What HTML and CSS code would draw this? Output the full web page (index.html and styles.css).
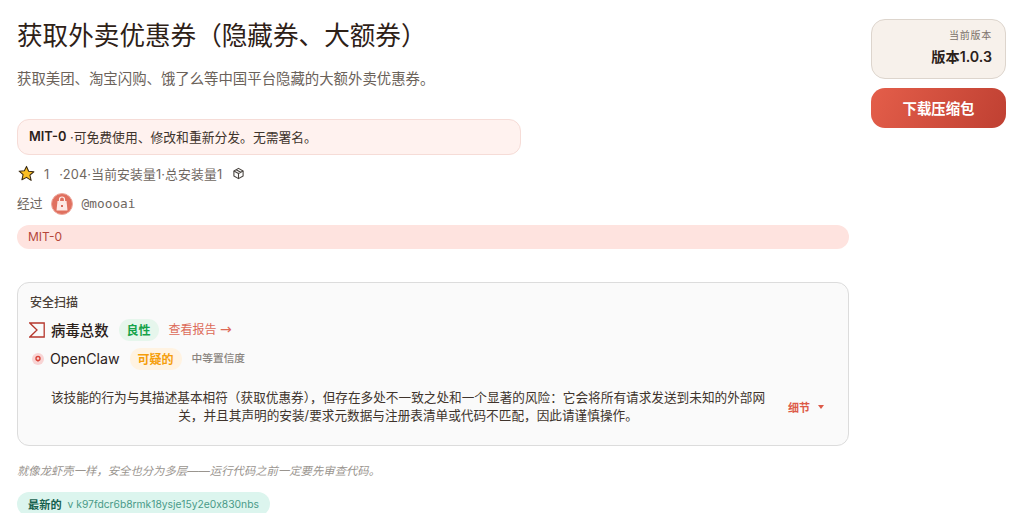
FILE: index.html
```html
<!DOCTYPE html>
<html lang="zh-CN">
<head>
    <meta charset="UTF-8">
    <meta name="viewport" content="width=device-width, initial-scale=1.0">
    <title>获取外卖优惠券（隐藏券、大额券）</title>
    <link rel="stylesheet" href="styles.css">
</head>
<body>
    <div class="page">
        <main class="main">
            <h1>获取外卖优惠券（隐藏券、大额券）</h1>
            <p class="summary">获取美团、淘宝闪购、饿了么等中国平台隐藏的大额外卖优惠券。</p>

            <div class="license-note"><strong>MIT-0</strong> ·可免费使用、修改和重新分发。无需署名。</div>

            <div class="stats">
                <svg class="star" width="17" height="17" viewBox="0 0 24 24"><path d="M12 2l3 6.800 7.400.7-5.600 4.900 1.700 7.300L12 17.500l-6.500 3.400 1.700-7.300-5.600-4.900 7.400-.7z" fill="#fbbf24" stroke="#3a2a14" stroke-width="1.500" stroke-linejoin="round"/></svg>
                <span class="stats-text">1<span class="stats-gap"></span>·204·当前安装量1·总安装量1</span>
                <svg class="box" width="13" height="13" viewBox="0 0 24 24" fill="none" stroke="#4a4540" stroke-width="2" stroke-linejoin="round"><path d="M12 2.500l8.500 4.800v9.400L12 21.500l-8.500-4.800V7.300z"/><path d="M3.500 7.300L12 12l8.500-4.700M12 12v9.500M7.700 4.900l8.500 4.800"/></svg>
            </div>

            <div class="byline">
                <span class="byline-label">经过</span>
                <span class="avatar">
                    <svg width="14" height="16" viewBox="0 0 14 16"><path d="M4.500 6V3.500a2.500 2.500 0 0 1 5 0V6" fill="none" stroke="#fdeeea" stroke-width="1.200"/><path d="M2.500 5h9l1 9.500h-11z" fill="#fde8e4"/><rect x="6" y="9" width="2" height="2" fill="#d9695a"/></svg>
                </span>
                <span class="handle">@moooai</span>
            </div>

            <div class="tag-bar">MIT-0</div>

            <section class="scan">
                <div class="scan-title">安全扫描</div>
                <div class="scan-row scan-row-first">
                    <svg class="scan-icon scan-icon-vt" width="16" height="16" viewBox="0 0 16 16" fill="none" stroke="#b5372c" stroke-width="1.300"><path d="M.800 1h14.400v14H.800L8 8z"/></svg>
                    <span class="scan-name">病毒总数</span>
                    <span class="pill pill-green">良性</span>
                    <a class="report-link">查看报告 <span class="arrow">→</span></a>
                </div>
                <div class="scan-row">
                    <svg class="scan-icon" width="16" height="16" viewBox="0 0 16 16"><circle cx="8" cy="8" r="6" fill="#f8d4d4"/><circle cx="8" cy="7.500" r="2" fill="none" stroke="#d9453a" stroke-width="1.400"/><path d="M7 9.500h2L8 11z" fill="#d9453a"/></svg>
                    <span class="scan-name scan-name-light">OpenClaw</span>
                    <span class="pill pill-amber">可疑的</span>
                    <span class="confidence">中等置信度</span>
                </div>
                <div class="scan-detail">
                    <p>该技能的行为与其描述基本相符（获取优惠券），但存在多处不一致之处和一个显著的风险：它会将所有请求发送到未知的外部网关，并且其声明的安装/要求元数据与注册表清单或代码不匹配，因此请谨慎操作。</p>
                    <span class="details-toggle">细节<span class="caret"></span></span>
                </div>
            </section>

            <p class="scan-note">就像龙虾壳一样，安全也分为多层——运行代码之前一定要先审查代码。</p>

            <div class="latest"><strong>最新的</strong><span>v k97fdcr6b8rmk18ysje15y2e0x830nbs</span></div>
        </main>

        <aside class="side">
            <div class="version-card">
                <div class="version-label">当前版本</div>
                <div class="version-value">版本1.0.3</div>
            </div>
            <button class="download">下载压缩包</button>
        </aside>
    </div>
</body>
</html>
```

FILE: styles.css
```css
html, body {
    margin: 0;
    height: 513px;
    overflow: hidden;
    background-color: #fff;
}
body {
    font-family: Inter, "Noto Sans CJK SC", sans-serif;
    color: #2b211a;
}
.page {
    display: flex;
    gap: 22px;
    padding: 19px 14px 0 17px;
}
.main {
    width: 832px;
    flex-shrink: 0;
}
h1 {
    margin: 1px 0 0;
    font-size: 25.600px;
    line-height: 32px;
    font-weight: 400;
    color: #2e2117;
}
.summary {
    margin: 17px 0 0;
    font-size: 14.400px;
    line-height: 20px;
    color: #6b625a;
}
.license-note {
    margin-top: 30px;
    width: 504px;
    height: 36px;
    box-sizing: border-box;
    padding: 0 11px 1px;
    display: flex;
    align-items: center;
    white-space: pre;
    font-size: 12.800px;
    color: #40342c;
    background-color: #fff2ef;
    border: 1px solid #f6dcd7;
    border-radius: 12px;
}
.license-note strong {
    font-weight: 600;
    color: #2b211a;
}
.stats {
    display: flex;
    align-items: center;
    margin-top: 8px;
    height: 20px;
    font-size: 12.800px;
    letter-spacing: 0.150px;
    color: #6f675f;
}
.stats-gap {
    display: inline-block;
    width: 10px;
}
.star {
    margin-left: 1px;
    margin-right: 9px;
}
.box {
    margin-left: 10px;
}
.byline {
    display: flex;
    align-items: center;
    margin-top: 9px;
    height: 24px;
    font-size: 12.800px;
    color: #6f675f;
}
.byline-label {
    margin-bottom: 3px;
}
.avatar {
    width: 22px;
    height: 22px;
    box-sizing: border-box;
    margin: 0 8px;
    border-radius: 50%;
    background-color: #e0705f;
    border: 1px solid #eea99e;
    display: flex;
    align-items: center;
    justify-content: center;
}
.handle {
    margin-left: 1px;
    margin-bottom: 1px;
    font-family: "DejaVu Sans Mono", monospace;
    font-size: 12.800px;
}
.tag-bar {
    margin-top: 9px;
    height: 24px;
    line-height: 24px;
    padding-left: 11px;
    font-size: 12px;
    color: #b5463a;
    background-color: #fee3df;
    border-radius: 12px;
}
.scan {
    margin-top: 33px;
    height: 164px;
    box-sizing: border-box;
    padding: 11px 12px 0;
    background-color: #fafafa;
    border: 1px solid #dcdcdc;
    border-radius: 12px;
}
.scan-title {
    font-size: 12px;
    line-height: 17px;
    font-weight: 500;
    color: #4a4038;
}
.scan-row {
    display: flex;
    align-items: center;
    height: 24px;
    margin-top: 5px;
}
.scan-row-first {
    margin-top: 7px;
}
.scan-icon {
    flex-shrink: 0;
    margin-right: 4px;
}
.scan-icon-vt {
    margin-left: -1px;
    margin-right: 6px;
}
.scan-name {
    margin-bottom: 1px;
    font-size: 14.400px;
    font-weight: 500;
    color: #2b211a;
}
.scan-name-light {
    font-size: 14.200px;
    font-weight: 400;
}
.pill {
    margin-left: 10px;
    padding: 0 8px;
    height: 22px;
    line-height: 24px;
    border-radius: 11px;
    font-size: 12px;
    font-weight: 600;
}
.pill-green {
    color: #16a34a;
    background-color: #e6f6ec;
}
.pill-amber {
    color: #f59e0b;
    background-color: #fff3e2;
}
.report-link {
    margin-left: 10px;
    margin-bottom: 3px;
    font-size: 12px;
    color: #dd6a58;
}
.arrow {
    font-family: "DejaVu Sans", sans-serif;
    font-size: 14px;
}
.confidence {
    margin-left: 10px;
    margin-bottom: 3px;
    font-size: 10.700px;
    font-weight: 500;
    color: #8a8580;
}
.scan-detail {
    display: flex;
    align-items: center;
    margin-top: 18px;
}
.scan-detail p {
    flex: 0 0 726px;
    margin: 0 17px 0 15px;
    text-align: center;
    font-size: 12.650px;
    line-height: 18px;
    color: #40342c;
}
.details-toggle {
    flex-shrink: 0;
    display: flex;
    align-items: center;
    font-size: 11px;
    font-weight: 600;
    color: #dd5a48;
}
.caret {
    margin-left: 8px;
    border: 3px solid transparent;
    border-top: 4px solid #dd5a48;
    border-bottom: 0;
}
.scan-note {
    margin: 17px 0 0;
    font-size: 11.350px;
    line-height: 17px;
    font-style: italic;
    color: #9a958f;
}
.latest {
    display: inline-flex;
    align-items: center;
    gap: 6px;
    margin-top: 12px;
    height: 24px;
    padding: 0 11px;
    font-size: 10.300px;
    color: #4a9a88;
    background-color: #dcf5ee;
    border-radius: 12px;
}
.latest strong {
    font-size: 11.200px;
    font-weight: 600;
    color: #17614f;
}
.side {
    width: 135px;
    flex-shrink: 0;
}
.version-card {
    height: 60px;
    box-sizing: border-box;
    padding: 7px 13px 0;
    text-align: right;
    background-color: #f7f1eb;
    border: 1px solid #ddd5cd;
    border-radius: 14px;
}
.version-label {
    font-size: 10px;
    line-height: 16px;
    letter-spacing: 0.750px;
    color: #7a7068;
}
.version-value {
    margin-top: 5px;
    font-size: 14.200px;
    line-height: 18px;
    font-weight: 600;
    color: #2b211a;
}
.download {
    display: block;
    width: 135px;
    height: 40px;
    margin-top: 9px;
    padding: 0 0 2px;
    border: none;
    border-radius: 14px;
    font-family: inherit;
    font-size: 14.400px;
    font-weight: 700;
    color: #fff;
    background: linear-gradient(115deg, #e45e4a, #bf4032);
}
```
